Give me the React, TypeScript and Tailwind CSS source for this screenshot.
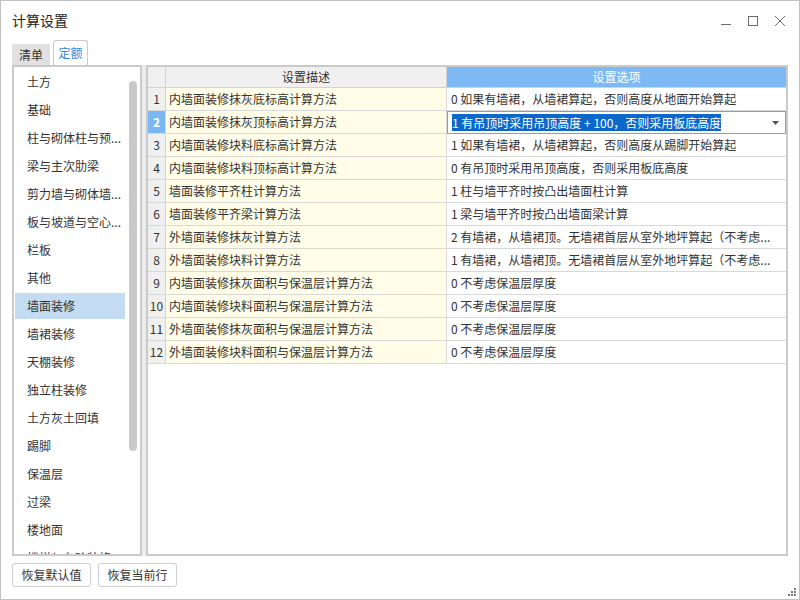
const font = { fontFamily: '"Noto Sans CJK SC", "Noto Sans", sans-serif' };

const categories = [
  "土方",
  "基础",
  "柱与砌体柱与预...",
  "梁与主次肋梁",
  "剪力墙与砌体墙...",
  "板与坡道与空心...",
  "栏板",
  "其他",
  "墙面装修",
  "墙裙装修",
  "天棚装修",
  "独立柱装修",
  "土方灰土回填",
  "踢脚",
  "保温层",
  "过梁",
  "楼地面",
  "楼梯与台阶装修",
];

const rows = [
  ["内墙面装修抹灰底标高计算方法", "0 如果有墙裙，从墙裙算起，否则高度从地面开始算起"],
  ["内墙面装修抹灰顶标高计算方法", "1 有吊顶时采用吊顶高度 + 100，否则采用板底高度"],
  ["内墙面装修块料底标高计算方法", "1 如果有墙裙，从墙裙算起，否则高度从踢脚开始算起"],
  ["内墙面装修块料顶标高计算方法", "0 有吊顶时采用吊顶高度，否则采用板底高度"],
  ["墙面装修平齐柱计算方法", "1 柱与墙平齐时按凸出墙面柱计算"],
  ["墙面装修平齐梁计算方法", "1 梁与墙平齐时按凸出墙面梁计算"],
  ["外墙面装修抹灰计算方法", "2 有墙裙，从墙裙顶。无墙裙首层从室外地坪算起（不考虑..."],
  ["外墙面装修块料计算方法", "1 有墙裙，从墙裙顶。无墙裙首层从室外地坪算起（不考虑..."],
  ["内墙面装修抹灰面积与保温层计算方法", "0 不考虑保温层厚度"],
  ["内墙面装修块料面积与保温层计算方法", "0 不考虑保温层厚度"],
  ["外墙面装修抹灰面积与保温层计算方法", "0 不考虑保温层厚度"],
  ["外墙面装修块料面积与保温层计算方法", "0 不考虑保温层厚度"],
];

function WindowControls() {
  return (
    <div className="flex items-center gap-[15px] text-[#6b6b6b] pr-[13px]">
      <svg width="12" height="12" viewBox="0 0 12 12">
        <path d="M1 9.5h10" stroke="currentColor" strokeWidth="1" />
      </svg>
      <svg width="12" height="12" viewBox="0 0 12 12">
        <rect x="1.5" y="1.5" width="9" height="9" fill="none" stroke="currentColor" strokeWidth="1" />
      </svg>
      <svg width="12" height="12" viewBox="0 0 12 12">
        <path d="M1 1l10 10M11 1L1 11" stroke="currentColor" strokeWidth="1" />
      </svg>
    </div>
  );
}

export default function App() {
  return (
    <div
      className="w-[800px] h-[600px] bg-white border border-[#c2c2c2] flex flex-col text-[12px] text-[#333] relative"
      style={font}
    >
      {/* title bar */}
      <div className="h-[39px] flex items-center justify-between pl-[11px]">
        <span className="text-[14px] text-[#222]">计算设置</span>
        <WindowControls />
      </div>

      {/* tabs */}
      <div className="h-[25px] flex items-end pl-[11px] gap-[3px]">
        <div className="w-[38px] h-[21px] bg-[#e1e1e1] flex items-center justify-center text-[#333]">清单</div>
        <div className="w-[35px] h-[25px] bg-white border border-b-0 border-[#c9c9c9] rounded-t-[3px] flex items-center justify-center text-[#2f8ae5]">
          定额
        </div>
      </div>

      {/* body */}
      <div className="h-[491px] flex px-[11px]">
        {/* category list */}
        <div className="w-[130px] border-2 border-[#cacaca] flex overflow-hidden">
          <div className="flex-1 pt-[1px] overflow-hidden">
            {categories.map((c) => (
              <div key={c} className="h-[28px] py-[1px] px-[1px]">
                <div
                  className={`h-[26px] flex items-center pl-[12px] whitespace-nowrap ${
                    c === "墙面装修" ? "bg-[#c4dcf2]" : ""
                  }`}
                >
                  {c}
                </div>
              </div>
            ))}
          </div>
          <div className="w-[14px] pt-[14px] pl-[3px]">
            <div className="w-[8px] h-[370px] rounded-full bg-[#c9c9c9]" />
          </div>
        </div>

        {/* splitter */}
        <div className="w-[4px] bg-[#ececec]" />

        {/* settings table */}
        <div className="flex-1 border-2 border-[#cacaca] overflow-hidden">
          <div className="grid grid-cols-[18px_281px_1fr] h-[21px] border-b border-[#d3d3d3]">
            <div className="bg-[#f0f0f0] border-r border-[#d3d3d3]" />
            <div className="bg-[#f0f0f0] border-r border-[#d3d3d3] flex items-center justify-center">设置描述</div>
            <div className="bg-[#7db9f4] text-white flex items-center justify-center">设置选项</div>
          </div>
          {rows.map(([desc, opt], i) => {
            const selected = i === 1;
            return (
              <div key={i} className="grid grid-cols-[18px_281px_1fr] h-[23px] border-b border-[#d8d8d8]">
                <div
                  className={`border-r border-[#d3d3d3] flex items-center justify-center ${
                    selected ? "bg-[#7ab7f4] text-white font-bold" : "bg-[#f0f0f0]"
                  }`}
                >
                  {i + 1}
                </div>
                <div className="bg-[#fffde8] border-r border-[#d8d8d8] flex items-center pl-[3px] whitespace-nowrap">
                  {desc}
                </div>
                {selected ? (
                  <div className="bg-white border border-[#64a8ea] flex items-center justify-between pl-[4px] pr-[6px] -mb-[1px]">
                    <span className="bg-[#0b67c9] text-white leading-[17px] whitespace-nowrap">{opt}</span>
                    <svg width="7" height="4" viewBox="0 0 7 4">
                      <path d="M0 0h7L3.5 4z" fill="#555" />
                    </svg>
                  </div>
                ) : (
                  <div className="bg-white flex items-center pl-[4px] pr-[2px] min-w-0 overflow-hidden whitespace-nowrap">
                    {opt}
                  </div>
                )}
              </div>
            );
          })}
        </div>
      </div>

      {/* footer buttons */}
      <div className="flex gap-[7px] px-[11px] pt-[7px]">
        <button className="w-[79px] h-[24px] border border-[#cdcdcd] rounded-[3px] bg-white text-[12px] text-[#333]">
          恢复默认值
        </button>
        <button className="w-[79px] h-[24px] border border-[#cdcdcd] rounded-[3px] bg-white text-[12px] text-[#333]">
          恢复当前行
        </button>
      </div>

      {/* resize grip */}
      <svg className="absolute right-[3px] bottom-[3px]" width="8" height="8" viewBox="0 0 8 8">
        <rect x="6" y="0" width="2" height="2" fill="#777" />
        <rect x="3" y="3" width="2" height="2" fill="#777" />
        <rect x="6" y="3" width="2" height="2" fill="#777" />
        <rect x="0" y="6" width="2" height="2" fill="#777" />
        <rect x="3" y="6" width="2" height="2" fill="#777" />
        <rect x="6" y="6" width="2" height="2" fill="#777" />
      </svg>
    </div>
  );
}
